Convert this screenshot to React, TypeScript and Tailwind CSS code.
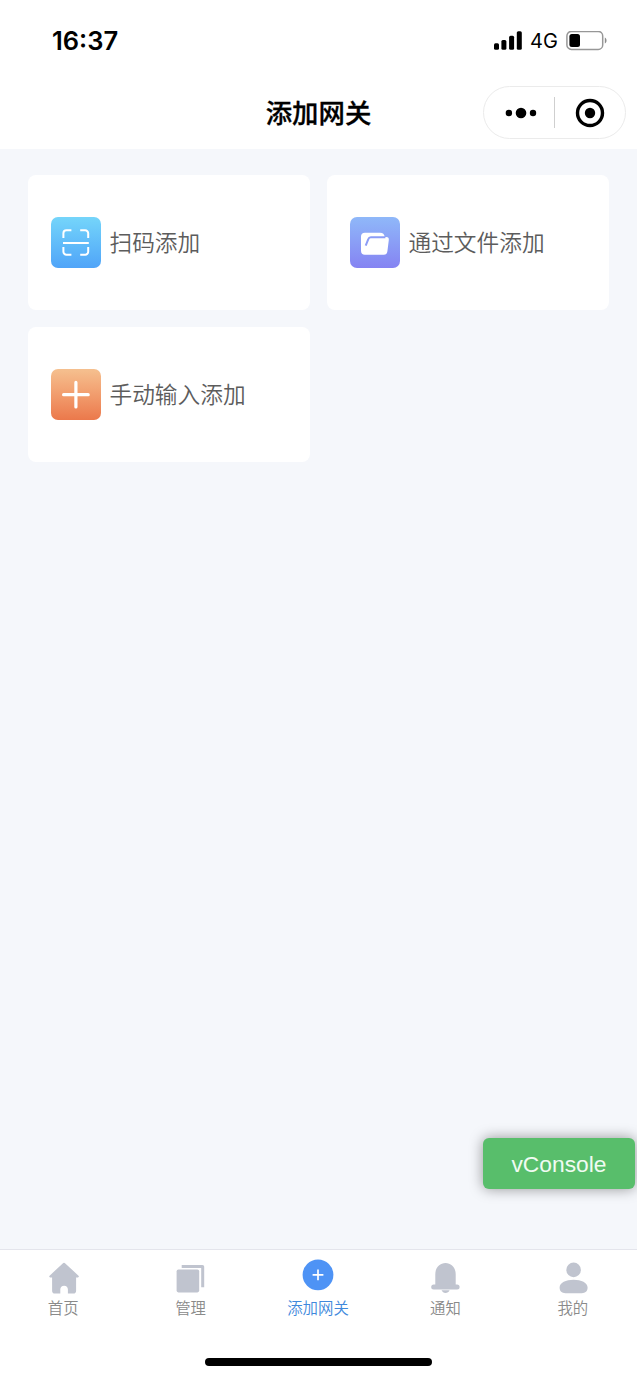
import type { ReactNode } from "react";

function StatusBar() {
  return (
    <div className="flex h-[76px] items-center justify-between pt-[5px] pr-[30px] pl-[52px]">
      <span className="font-['Inter',sans-serif] text-[25.5px] leading-[30px] font-semibold text-black">16:37</span>
      <div className="flex items-center">
        <svg className="h-[19px] w-[28px]" viewBox="0 0 28 19">
          <rect x="0" y="12.2" width="5" height="6.6" rx="1.5" />
          <rect x="7.4" y="9" width="5" height="9.8" rx="1.5" />
          <rect x="15.1" y="4.7" width="5" height="14.1" rx="1.5" />
          <rect x="22.8" y="0.2" width="5" height="18.6" rx="1.5" />
        </svg>
        <span className="mt-px ml-[8px] w-[28px] font-['Inter',sans-serif] text-[20px] leading-[24px] text-black">4G</span>
        <svg className="ml-[8px] h-[20px] w-[41px]" viewBox="0 0 41 20">
          <rect x="0.9" y="0.4" width="35.8" height="18" rx="4.5" fill="none" stroke="#979797" strokeWidth="1.5" />
          <rect x="3.4" y="3.1" width="10.6" height="12.8" rx="2.5" />
          <path d="M38.8 6.5v6c2.3-1.2 2.3-4.8 0-6z" fill="#8c8c8c" />
        </svg>
      </div>
    </div>
  );
}

function NavBar() {
  return (
    <div className="grid h-[73px] grid-cols-[1fr_auto_1fr] items-center">
      <span />
      <h1 className="mt-[-1px] font-['Noto_Sans_CJK_SC',sans-serif] text-[26.4px] leading-[36px] font-medium whitespace-nowrap text-black [-webkit-text-stroke:0.3px_black]">
        添加网关
      </h1>
      <div className="mt-[-1px] mr-[11px] flex h-[53px] w-[143px] items-center justify-self-end rounded-full border border-[#ebebeb] bg-white">
        <div className="flex w-[70px] items-center justify-center pt-px pl-[4px]">
          <svg className="h-[12px] w-[32px]" viewBox="0 0 32 12">
            <circle cx="3.9" cy="6" r="3.2" />
            <circle cx="16" cy="6" r="5.3" />
            <circle cx="28" cy="6" r="3.2" />
          </svg>
        </div>
        <span className="h-[31px] w-px bg-[#cfcfcf]" />
        <div className="flex flex-1 items-center justify-center pt-px pr-px">
          <svg className="h-[30px] w-[30px]" viewBox="0 0 30 30">
            <circle cx="15" cy="15" r="12.5" fill="none" stroke="black" strokeWidth="3.4" />
            <circle cx="15" cy="15" r="5.2" />
          </svg>
        </div>
      </div>
    </div>
  );
}

function ActionCard({ label, tile, children }: { label: string; tile: string; children: ReactNode }) {
  return (
    <button className="flex h-[135px] items-center rounded-[8px] bg-white pl-[23px]">
      <span className={`h-[51px] w-[50px] shrink-0 rounded-[7px] bg-linear-to-b ${tile}`}>
        <svg className="h-[51px] w-[50px]" viewBox="0.5 0 50 51" fill="none">
          {children}
        </svg>
      </span>
      <span className="mt-[-2px] ml-[8.5px] font-['Noto_Sans_CJK_SC',sans-serif] text-[22.7px] leading-[34px] font-[350] text-[#5c5c5c]">
        {label}
      </span>
    </button>
  );
}

function Tab({ label, active, children }: { label: string; active?: boolean; children: ReactNode }) {
  return (
    <button className="flex flex-1 flex-col items-center pt-[9px]">
      <svg className="h-[38px] w-[38px]" viewBox="0 0 38 38" fill="#c0c4cf">
        {children}
      </svg>
      <span
        className={`mt-[-1px] mr-px font-['Noto_Sans_CJK_SC',sans-serif] text-[15.4px] leading-[22px] font-[350] ${active ? "text-[#4089dc]" : "text-[#8a8a8a]"}`}
      >
        {label}
      </span>
    </button>
  );
}

export default function App() {
  return (
    <div className="relative flex h-[1379px] w-[637px] flex-col overflow-hidden bg-[#f5f7fb]">
      <header className="h-[149px] bg-white">
        <StatusBar />
        <NavBar />
      </header>

      <main className="grid flex-1 grid-cols-2 content-start gap-[17px] px-[28px] pt-[26px]">
        <ActionCard label="扫码添加" tile="from-[#75d5fa] to-[#50a4f8]">
          <path
            d="M12.9 21v-4.7a3 3 0 0 1 3-3h5M29.7 13.3h5a3 3 0 0 1 3 3V21M37.7 30v4.7a3 3 0 0 1-3 3h-5M20.9 37.7h-5a3 3 0 0 1-3-3V30M12.5 25.9h25.8"
            stroke="white"
            strokeWidth="2"
          />
        </ActionCard>
        <ActionCard label="通过文件添加" tile="from-[#8fb8f9] to-[#8583f2]">
          <path
            d="M15.4 15.7h15.2c2.7 0 4.3 1.5 4.7 4.3h1.4c2 0 2.9 1.1 2.6 3l-1.4 11.2c-.3 2.4-1.5 3.5-3.7 3.5H15.4c-2.5 0-3.9-1.4-3.9-3.9V19.6c0-2.5 1.4-3.9 3.9-3.9z"
            fill="white"
          />
          <path d="M16.2 28.7l2.5-6.4c.6-1.5 1.1-2 2.6-2h14.6" stroke="#8c9df6" strokeWidth="2" />
        </ActionCard>
        <ActionCard label="手动输入添加" tile="from-[#f5c08f] to-[#eb784b]">
          <path d="M25.4 13.4v24.6M13.1 25.7h24.6" stroke="white" strokeWidth="3.2" strokeLinecap="round" />
        </ActionCard>
      </main>

      <button className="absolute top-[1138px] left-[483px] h-[51px] w-[152px] rounded-[6px] bg-[#58be6b] font-['Liberation_Sans',sans-serif] text-[22.8px] leading-[53px] text-[#f0fbf2] shadow-[0_0_14px_rgba(0,0,0,0.4)]">
        vConsole
      </button>

      <footer className="h-[130px] border-t border-[#e4e5ec] bg-white">
        <nav className="flex h-[108px]">
          <Tab label="首页">
            <path d="M17.7 4.4c.9-.8 1.7-.8 2.6 0l13.2 12.3c.8.8.4 1.7-.6 1.7h-1.8v13.3c0 1.9-.9 2.8-2.8 2.8h-5.4v-4c0-2.3-1.5-3.8-3.8-3.8s-3.8 1.5-3.8 3.8v4H9.9c-1.9 0-2.8-.9-2.8-2.8V18.4H5.2c-1 0-1.4-.9-.6-1.7z" />
          </Tab>
          <Tab label="管理">
            <rect x="4.6" y="10.4" width="22.6" height="23" rx="1.8" />
            <path d="M9.7 6h20.6c1.2 0 1.9.7 1.9 1.9v20.4h-3V9H9.7z" />
          </Tab>
          <Tab label="添加网关" active>
            <circle cx="18" cy="15.8" r="15.4" fill="#4e93f5" />
            <path d="M18 10.5v10.8M12.6 15.9h10.8" stroke="white" strokeWidth="1.7" />
          </Tab>
          <Tab label="通知">
            <path d="M8.3 25.5V15.2C8.3 8.6 12.8 4 18.5 4s10.2 4.6 10.2 11.2v10.3h1.4a2.5 2.5 0 0 1 0 5H6.7a2.5 2.5 0 0 1 0-5zM14.5 31.3h8.1c-.8 1.7-2.3 2.6-4.1 2.6s-3.2-.9-4-2.6z" />
          </Tab>
          <Tab label="我的">
            <circle cx="19.6" cy="10.9" r="7.3" />
            <path d="M5.6 28.5c0-5 6.3-7.8 14-7.8s14 2.8 14 7.8c0 3.7-2.3 5.7-5.8 5.7H11.4c-3.5 0-5.8-2-5.8-5.7z" />
          </Tab>
        </nav>
        <div className="mx-auto h-[8px] w-[227px] rounded-full bg-black" />
      </footer>
    </div>
  );
}
